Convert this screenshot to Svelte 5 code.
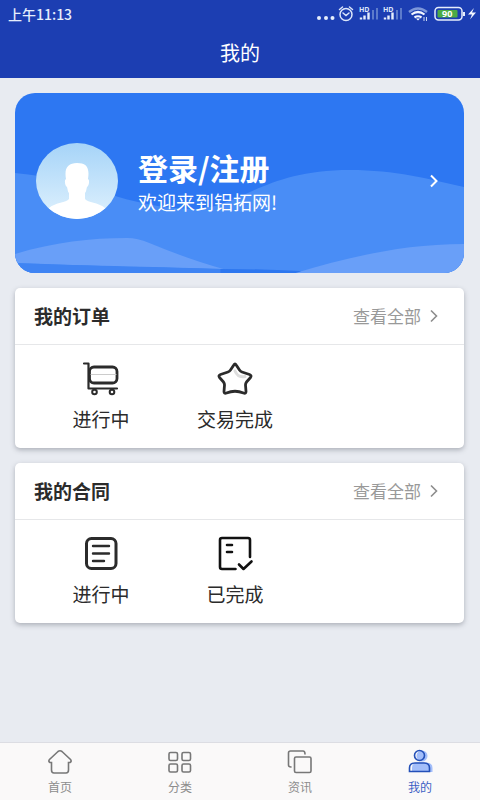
<script>
  const sections = [
    { title: '我的订单', items: [{ icon: 'cart', label: '进行中' }, { icon: 'star', label: '交易完成' }] },
    { title: '我的合同', items: [{ icon: 'doc', label: '进行中' }, { icon: 'done', label: '已完成' }] }
  ];
  const tabs = [
    { icon: 'home', label: '首页' },
    { icon: 'grid', label: '分类' },
    { icon: 'copy', label: '资讯' },
    { icon: 'user', label: '我的' }
  ];
  let active = $state('user');
</script>

<div class="app">
  <header>
    <div class="status">
      <span class="time">上午11:13</span>
      <svg class="indicators" width="164" height="24" viewBox="0 0 164 24" fill="none" aria-hidden="true">
        <g fill="#e6eefc">
          <circle cx="6" cy="16" r="2" /><circle cx="13" cy="16" r="2" /><circle cx="19.500" cy="16" r="2" />
        </g>
        <g stroke="#dce6fa" stroke-width="1.500" stroke-linecap="round">
          <circle cx="33" cy="12.500" r="6" />
          <path d="M30 11l3 2.500 3-2.500M26.500 7.500l3-2.500M39.500 7.500l-3-2.500" />
        </g>
        {#each [0, 24] as x}
          <g transform="translate({x} 0)">
            <text x="46" y="10" class="hd">HD</text>
            <path d="M48 17.500v-2M51.500 17.500v-4M55.500 17.500v-7" stroke="#e6eefc" stroke-width="2.400" />
            <path d="M60 17.500V8M64 17.500V6" stroke="#5d7bcb" stroke-width="2" />
          </g>
        {/each}
        <path d="M96 10q9-7 18 0" stroke="#7d97d9" stroke-width="2.400" />
        <path d="M98.500 12.500q6.500-5 13 0M101.500 15.500q3.500-2.500 7 0" stroke="#f2f6ff" stroke-width="2.200" />
        <path d="M103 16.500h4l-2 2z" fill="#fff" />
        <path d="M111 15v4M113.500 15v4" stroke="#cbd8f4" />
        <rect x="122" y="5.500" width="27" height="12.500" rx="3.500" stroke="#e6eefc" stroke-width="1.500" />
        <rect x="124.500" y="8" width="20" height="7.500" rx="1" fill="#4bab45" />
        <path d="M151 10v4" stroke="#e6eefc" stroke-width="2" />
        <text x="129" y="15" class="level">90</text>
        <path d="M161 6l-6 6.500h4l-2 5 6-7h-4l2-4.500z" fill="#f2f6ff" />
      </svg>
    </div>
    <h1>我的</h1>
  </header>

  <main>
    <a class="hero" href="#login">
      <svg class="waves" viewBox="0 0 448 180" preserveAspectRatio="none" aria-hidden="true">
        <path d="M0 80C35 83 70 92 100 103C130 112 155 116 183 116C225 113 250 77 334 77C380 77 412 86 448 94V180H0Z" fill="#498df6" />
        <path d="M0 161C40 149 75 145 112 145Q122 145 134 150Q175 167 208 176C140 174 70 173 0 170Z" fill="#699ff8" />
        <path d="M0 170C80 173 150 174 208 176Q245 176 290 180H0Z" fill="#3f84f3" />
        <path d="M205 176Q245 176 285 178V180H205Z" fill="#2d77ef" />
        <path d="M280 180C330 165 385 151 448 151V180Z" fill="#699ff8" />
      </svg>
      <svg class="avatar" viewBox="0 0 82 76" aria-hidden="true">
        <defs>
          <linearGradient id="sky" x2="0" y2="1"><stop stop-color="#a6d4f8" /><stop offset="1" stop-color="#dff1fd" /></linearGradient>
          <clipPath id="oval"><ellipse cx="41" cy="38" rx="41" ry="38" /></clipPath>
        </defs>
        <g clip-path="url(#oval)">
          <path d="M0 0h82v76H0z" fill="url(#sky)" />
          <path d="M30 36C28 25 32 20 41 20s13 4 11 16c2 1 1 7-1 8-1 4-1 5-2 6v6c3 4 13 3 20 9l6 13H7l6-13c7-6 17-5 20-9v-6c-1-1-1-2-2-6-2-1-3-7-1-8z" fill="#fff" />
        </g>
      </svg>
      <span class="welcome"><strong>登录/注册</strong><span>欢迎来到铝拓网!</span></span>
      <svg class="go" width="10" height="14" viewBox="0 0 10 14" aria-hidden="true"><path d="M2 1.500L7.500 7 2 12.500" /></svg>
    </a>

    {#each sections as section}
      <section>
        <div class="head">
          <h2>{section.title}</h2>
          <a href="#all">查看全部<svg width="10" height="14" viewBox="0 0 10 14" aria-hidden="true"><path d="M2 1.500L7.500 7 2 12.500" /></svg></a>
        </div>
        <div class="items">
          {#each section.items as item}
            <button>
              <svg width="40" height="40" viewBox="0 0 40 40" aria-hidden="true">
                {#if item.icon === 'cart'}
                  <path d="M3 4.500h4.500V29.500H36" stroke-width="2.200" />
                  <rect x="8.500" y="8" width="27.500" height="16" rx="4.500" stroke-width="2.800" />
                  <path d="M10 15.500h25" stroke="#ccc" stroke-width="1" />
                  <circle cx="13.500" cy="33" r="2.300" stroke-width="2" /><circle cx="31" cy="33" r="2.300" stroke-width="2" />
                {:else if item.icon === 'star'}
                  <path d="M20 12q3 7 10 5.500" stroke="#ddd" stroke-width="3" />
                  <path d="M18.800 6Q20 4 21.200 6L24.500 11Q25.500 12.500 27 13L34.500 15.500Q37 16.500 35.500 18.500L31.500 23Q30.500 24.500 30.500 26L31 32.500Q31 35 28.500 34Q20 30.500 11.500 34Q9 35 9 32.500L9.500 26Q9.500 24.500 8.500 23L4.500 18.500Q3 16.500 5.500 15.500L13 13Q14.500 12.500 15.500 11Z" stroke-width="2.800" />
                {:else if item.icon === 'doc'}
                  <rect x="5.500" y="4.500" width="29.500" height="30" rx="5" stroke-width="3" />
                  <path d="M12 12h16M12 19.500h16M12 27h11" stroke-width="2.400" />
                {:else}
                  <g stroke="#111" stroke-width="2.600">
                    <path d="M20.500 35H7Q5 35 5 33V6Q5 4 7 4H33Q35 4 35 6V23" />
                    <path d="M12 11h5M12 18h5M24 30.500l4.500 4.500 8-7.500" />
                  </g>
                {/if}
              </svg>
              <span>{item.label}</span>
            </button>
          {/each}
        </div>
      </section>
    {/each}
  </main>

  <nav>
    {#each tabs as tab}
      <button class:active={active === tab.icon} onclick={() => (active = tab.icon)}>
        <svg width="26" height="26" viewBox="0 0 26 26" aria-hidden="true">
          {#if tab.icon === 'home'}
            <path d="M11 2.500Q13 1 15 2.500L23.500 10.500Q25 12.500 23 13.500H21.500V21Q21.500 24 19 24H7Q4.500 24 4.500 21V13.500H3Q1 12.500 2.500 10.500Z" />
          {:else if tab.icon === 'grid'}
            <rect x="2" y="3.500" width="8.500" height="8" rx="1.500" /><rect x="15" y="3.500" width="8.500" height="8" rx="1.500" />
            <rect x="2" y="15" width="8.500" height="8" rx="1.500" /><rect x="15" y="15" width="8.500" height="8" rx="1.500" />
          {:else if tab.icon === 'copy'}
            <path d="M4 18Q1.500 18 1.500 16V4Q1.500 2 3.500 2H16Q18 2 18 5" />
            <rect x="7.500" y="8" width="16.500" height="15.500" rx="1.500" />
          {:else}
            <g fill="#a3befa" stroke="none"><circle cx="15" cy="7" r="5.500" /><path d="M5 23V19Q5 13.500 11 13.500H19Q25.500 13.500 25.500 19V23Z" /></g>
            <circle cx="12.500" cy="6.500" r="5" /><path d="M2.500 22.500V19Q2.500 14 8 14H17Q22.500 14 22.500 19V22.500Z" />
          {/if}
        </svg>
        <span>{tab.label}</span>
      </button>
    {/each}
  </nav>
</div>

<style>
  :global(body) { margin: 0; }
  .app {
    min-height: 100vh;
    display: flex;
    flex-direction: column;
    background: #e8ebf1;
    color: #2b2b2b;
    font-family: "Noto Sans CJK SC", sans-serif;
  }
  header { background: #1c3eb2; color: #fff; }
  .status {
    display: flex;
    justify-content: space-between;
    align-items: center;
    height: 28px;
    padding: 0 3px 0 8px;
  }
  .time { font-size: 14px; line-height: 28px; font-weight: 500; color: #e6eefc; }
  .hd { font: bold 7px "Noto Sans", sans-serif; fill: #dce6fa; }
  .level { font: bold 9px "Noto Sans", sans-serif; fill: #fff; }
  h1 { margin: 0; font-size: 20px; line-height: 50px; font-weight: 400; text-align: center; }
  main { flex: 1; display: flex; flex-direction: column; gap: 15px; padding: 15px 16px 15px 15px; }
  a { color: inherit; text-decoration: none; }
  svg { flex: none; fill: none; }
  .hero {
    position: relative;
    display: flex;
    align-items: center;
    gap: 20px;
    min-height: 180px;
    box-sizing: border-box;
    padding: 0 25px 5px 21px;
    border-radius: 20px;
    overflow: hidden;
    background: #2d77f2;
    color: #fff;
  }
  .waves { position: absolute; inset: 0; width: 100%; height: 100%; }
  .avatar { position: relative; width: 82px; height: 76px; }
  .welcome { position: relative; flex: 1; display: flex; flex-direction: column; font-size: 19px; line-height: 28px; }
  strong { font-size: 30px; line-height: 42px; }
  .go { position: relative; stroke: #fff; stroke-width: 2; }
  section { background: #fff; border-radius: 5px; box-shadow: 0 2px 5px rgba(60, 65, 80, 0.35); }
  .head {
    display: flex;
    justify-content: space-between;
    align-items: center;
    height: 56px;
    padding: 0 25px 0 19px;
    border-bottom: 1px solid #e6e7e9;
  }
  h2 { margin: 0; font-size: 19px; line-height: 28px; font-weight: 700; }
  .head a { display: flex; align-items: center; gap: 8px; font-size: 17px; line-height: 28px; color: #999; }
  .head a svg { stroke: #8c8c8c; stroke-width: 1.6; }
  .items { display: grid; grid-template-columns: repeat(3, 1fr); padding: 14px 28px 15px 19px; }
  button {
    display: flex;
    flex-direction: column;
    align-items: center;
    margin: 0;
    padding: 0;
    border: 0;
    background: none;
    color: inherit;
    font-family: inherit;
    cursor: pointer;
  }
  .items button { gap: 6px; font-size: 19px; line-height: 28px; }
  .items svg { stroke: #2b2b2b; stroke-linecap: round; stroke-linejoin: round; }
  nav { display: flex; border-top: 1px solid #dcdde3; background: #faf9f9; }
  nav button { flex: 1; gap: 4px; padding: 6px 0 5px; font-size: 12px; line-height: 16px; color: #8c8c8c; }
  nav svg { stroke: #777; stroke-width: 1.6; stroke-linecap: round; }
  nav .active { color: #3d5fc4; }
  nav .active svg { stroke: #2450b8; }
</style>
